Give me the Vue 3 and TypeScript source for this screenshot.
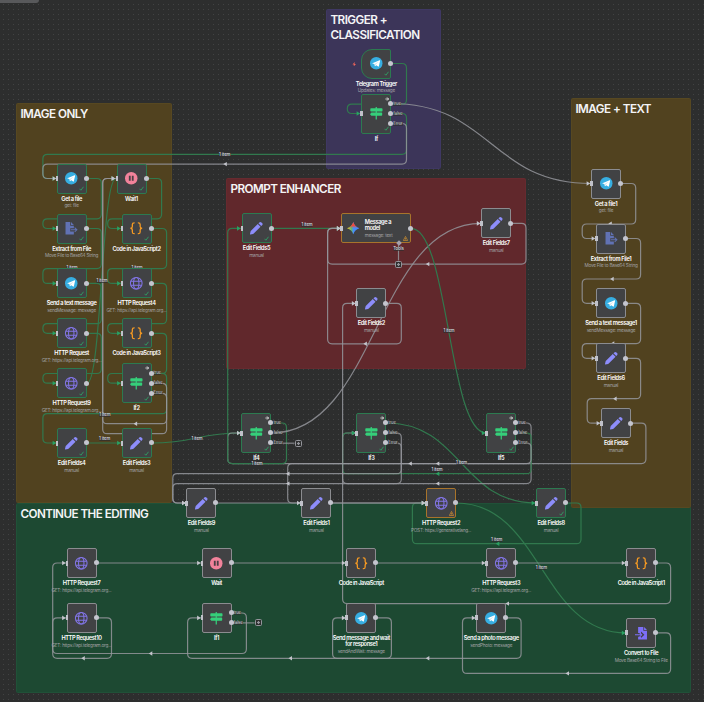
<script setup lang="ts">
type Icon = 'telegram' | 'pause' | 'extract' | 'code' | 'http' | 'if' | 'edit' | 'convert' | 'gemini'
type Status = 'ok' | 'warn' | 'idle'
type Tone = 'green' | 'grey'
type Point = [number, number]

interface Output { y: number; text?: string }
interface FlowNode {
  name: string[]
  sub?: string
  icon: Icon
  x: number
  y: number
  w: number
  h: number
  status: Status
  trigger?: boolean
  wide?: boolean
  outputs: Output[]
}
interface Edge { d: string; tone: Tone; tip?: Point }
interface Mark { x: number; y: number; tone: Tone }
interface Panel { title: string[]; tone: string; x: number; y: number; w: number; h: number }

const panels: Panel[] = [
  { title: ['CONTINUE THE EDITING'], tone: 'forest', x: 16, y: 503, w: 675, h: 190 },
  { title: ['IMAGE ONLY'], tone: 'olive', x: 16, y: 103, w: 156, h: 400 },
  { title: ['IMAGE + TEXT'], tone: 'olive', x: 571, y: 98, w: 120, h: 410 },
  { title: ['PROMPT ENHANCER'], tone: 'crimson', x: 226, y: 178, w: 300, h: 190.5 },
  { title: ['TRIGGER +', 'CLASSIFICATION'], tone: 'violet', x: 326, y: 8.5, w: 115.3, h: 160.5 },
]

function node(name: string | string[], icon: Icon, cx: number, cy: number, status: Status, sub?: string): FlowNode {
  return {
    name: Array.isArray(name) ? name : [name], sub, icon, status,
    x: cx - 15, y: cy - 15, w: 30, h: 30, outputs: [{ y: 15 }],
  }
}
function branch(name: string, cx: number, cy: number): FlowNode {
  return {
    name: [name], icon: 'if', status: 'ok', x: cx - 15, y: cy - 20, w: 30, h: 40,
    outputs: [{ y: 10, text: 'true' }, { y: 20, text: 'false' }, { y: 30, text: 'Error' }],
  }
}

const GET = 'GET: https://api.telegram.org...'
const MOVE = 'Move File to Base64 String'

const nodes: FlowNode[] = [
  { ...node('Telegram Trigger', 'telegram', 376.3, 63.5, 'ok', 'Updates: message'), trigger: true },
  branch('If', 376.3, 113.6),
  node('Get a file', 'telegram', 71.6, 178.5, 'ok', 'get: file'),
  node('Wait1', 'pause', 131.5, 178.5, 'ok'),
  node('Extract from File', 'extract', 71.6, 228.5, 'ok', MOVE),
  node('Code in JavaScript2', 'code', 136.5, 228.5, 'ok'),
  node('Send a text message', 'telegram', 71.6, 283.4, 'ok', 'sendMessage: message'),
  node('HTTP Request4', 'http', 136.5, 283.4, 'ok', GET),
  node('HTTP Request', 'http', 71.6, 333.3, 'ok', GET),
  node('Code in JavaScript3', 'code', 136.5, 333.3, 'ok'),
  node('HTTP Request9', 'http', 71.6, 383.2, 'ok', GET),
  branch('If2', 136.5, 383.3),
  node('Edit Fields4', 'edit', 71.6, 443, 'ok', 'manual'),
  node('Edit Fields3', 'edit', 136.5, 443, 'ok', 'manual'),
  node('Edit Fields5', 'edit', 256.5, 228.4, 'ok', 'manual'),
  { ...node(['Message a', 'model'], 'gemini', 376.3, 228.4, 'warn', 'message: text'), x: 341.3, w: 69.7, wide: true },
  node('Edit Fields7', 'edit', 496.2, 223.4, 'idle', 'manual'),
  node('Edit Fields2', 'edit', 371.3, 303.4, 'idle', 'manual'),
  node('Get a file1', 'telegram', 606, 183.5, 'idle', 'get: file'),
  node('Extract from File1', 'extract', 611, 238.5, 'idle', MOVE),
  node('Send a text message1', 'telegram', 611, 303.3, 'idle', 'sendMessage: message'),
  node('Edit Fields6', 'edit', 611, 358.3, 'idle', 'manual'),
  node('Edit Fields', 'edit', 616, 423.2, 'idle', 'manual'),
  branch('If4', 256.4, 433),
  branch('If3', 371.3, 433),
  branch('If5', 501.2, 433),
  node('Edit Fields9', 'edit', 201.4, 503, 'idle', 'manual'),
  node('Edit Fields1', 'edit', 316.4, 503, 'idle', 'manual'),
  node('HTTP Request2', 'http', 441.1, 503, 'warn', 'POST: https://generativelang...'),
  node('Edit Fields8', 'edit', 551.1, 503, 'ok', 'manual'),
  node('HTTP Request7', 'http', 81.5, 563, 'idle', GET),
  node('Wait', 'pause', 216.5, 563, 'idle'),
  node('Code in JavaScript', 'code', 361.3, 563, 'idle'),
  node('HTTP Request3', 'http', 501.2, 563, 'idle', GET),
  node('Code in JavaScript1', 'code', 641.2, 563, 'idle'),
  node('HTTP Request10', 'http', 81.5, 617.9, 'idle', GET),
  { ...node('If1', 'if', 216.5, 617.9, 'idle'), outputs: [{ y: 10, text: 'true' }, { y: 20, text: 'false' }] },
  node(['Send message and wait', 'for response1'], 'telegram', 361.3, 617.9, 'idle', 'sendAndWait: message'),
  node('Send a photo message', 'telegram', 491.2, 617.9, 'idle', 'sendPhoto: message'),
  node('Convert to File', 'convert', 641.2, 632.9, 'idle', 'Move Base64 String to File'),
]

/** Orthogonal polyline whose corners are rounded by up to 4.5px. */
function ortho(points: Point[]): string {
  let d = `M${points[0][0]} ${points[0][1]}`
  for (let i = 1; i < points.length - 1; i++) {
    const [px, py] = points[i - 1]
    const [x, y] = points[i]
    const [nx, ny] = points[i + 1]
    const a = Math.abs(x - px) + Math.abs(y - py)
    const b = Math.abs(nx - x) + Math.abs(ny - y)
    const r = Math.min(4.5, a / 2, b / 2)
    d += `L${x - Math.sign(x - px) * r} ${y - Math.sign(y - py) * r}`
    d += `Q${x} ${y} ${x + Math.sign(nx - x) * r} ${y + Math.sign(ny - y) * r}`
  }
  const end = points[points.length - 1]
  return `${d}L${end[0]} ${end[1]}`
}
/** Leaves a port to the right, runs back along `mid`, and re-enters from the left. */
function loop(tone: Tone, sx: number, sy: number, right: number, mid: number, left: number, tx: number, ty: number): Edge {
  return { tone, tip: [tx, ty], d: ortho([[sx, sy], [right, sy], [right, mid], [left, mid], [left, ty], [tx, ty]]) }
}
function curve(tone: Tone, sx: number, sy: number, tx: number, ty: number): Edge {
  const m = (sx + tx) / 2
  return { tone, tip: [tx, ty], d: `M${sx} ${sy}C${m} ${sy} ${m} ${ty} ${tx} ${ty}` }
}
function line(tone: Tone, sx: number, tx: number, y: number): Edge {
  return { tone, tip: [tx, y], d: `M${sx} ${y}H${tx}` }
}

const edges: Edge[] = [
  loop('green', 391, 63.5, 406.5, 104.2, 347.3, 361, 113.5),
  loop('green', 391, 113.5, 406.5, 154.3, 42.9, 57, 178.5),
  loop('grey', 391, 123.5, 406.5, 164.1, 42.9, 57, 178.5),
  curve('grey', 391, 103.5, 591, 183.5),
  loop('green', 87, 178.5, 101.3, 218.8, 42.9, 57, 228.5),
  loop('green', 87, 228.5, 101.3, 268.6, 42.9, 57, 283.4),
  loop('green', 87, 283.4, 101.3, 323.7, 42.9, 57, 333.3),
  loop('green', 87, 333.3, 101.3, 373.5, 42.9, 57, 383.2),
  curve('green', 87, 383.2, 116, 178.5),
  loop('green', 147, 178.5, 161.6, 218.8, 107.7, 121.5, 228.5),
  loop('green', 151.5, 228.5, 166.6, 268.6, 107.7, 121.5, 283.4),
  loop('green', 151.5, 283.4, 166.6, 323.7, 107.7, 121.5, 333.3),
  loop('green', 151.5, 333.3, 166.6, 373.5, 107.7, 121.5, 383.2),
  loop('green', 151.5, 373.3, 166.6, 413.7, 42.9, 57, 443),
  loop('grey', 151.5, 383.3, 166.6, 423.7, 102.7, 116, 178.5),
  loop('grey', 151.5, 393.3, 166.6, 433.7, 102.7, 116, 178.5),
  line('green', 87, 121.5, 443),
  curve('green', 151.5, 443, 241.4, 433),
  loop('grey', 631, 423.2, 645.9, 463.6, 227.7, 241.4, 433),
  loop('green', 271.4, 423, 286.5, 463.6, 227.7, 241.4, 228.4),
  line('green', 271.5, 341.3, 228.4),
  loop('grey', 511.2, 223.4, 526, 264.1, 327.6, 341.3, 228.4),
  loop('grey', 386.3, 303.4, 401.3, 343.8, 327.6, 341.3, 228.4),
  curve('grey', 271.4, 433, 481.2, 223.4),
  curve('green', 411, 228.4, 486.2, 433),
  { tone: 'grey', d: 'M271.4 443.2H294.5' },
  { tone: 'grey', d: 'M398.5 243.5V260.5' },
  curve('green', 386.3, 423, 536.1, 503),
  loop('grey', 516.2, 423, 531.1, 483.6, 342.6, 356.3, 433),
  loop('green', 516.2, 433, 531.1, 473.7, 342.6, 356.3, 433),
  loop('grey', 516.2, 443, 531.1, 463.6, 287.7, 301.4, 503),
  loop('grey', 386.3, 433, 401.3, 473.7, 172.8, 186.4, 503),
  loop('grey', 386.3, 443, 401.3, 483.6, 172.8, 186.4, 503),
  loop('green', 566.1, 503, 581, 543.7, 412.4, 426.1, 503),
  line('grey', 216.5, 426.1, 503),
  line('grey', 331.4, 426.1, 503),
  curve('green', 456.1, 503, 626.2, 632.9),
  line('grey', 96.6, 201.5, 563),
  line('grey', 231.6, 346.3, 563),
  line('grey', 376.3, 486.2, 563),
  line('grey', 516.2, 626.2, 563),
  loop('grey', 656.2, 563, 670.6, 603.6, 342.6, 356.3, 303.4),
  loop('grey', 96.6, 617.9, 111.5, 658.3, 52.7, 66.5, 617.9),
  loop('grey', 231.6, 613, 246.4, 653.5, 52.7, 66.5, 563),
  { tone: 'grey', d: 'M231.6 622.9H254.5' },
  loop('grey', 376.3, 617.9, 391.4, 658.3, 187.6, 201.5, 617.9),
  loop('grey', 506.2, 617.9, 521.1, 658.3, 332.6, 346.3, 617.9),
  loop('grey', 656.2, 632.9, 670.6, 673.4, 462.5, 476.2, 617.9),
  loop('grey', 621, 183.5, 635.7, 224, 582.2, 596, 238.5),
  loop('grey', 626, 238.5, 640.6, 279, 582.2, 596, 303.3),
  loop('grey', 626, 303.3, 640.6, 343.6, 582.2, 596, 358.3),
  loop('grey', 626, 358.3, 640.6, 398.7, 587.2, 601, 423.2),
]

const marks: Mark[] = [
  { x: 225.5, y: 164.1, tone: 'grey' }, { x: 135.8, y: 423.7, tone: 'grey' },
  { x: 428, y: 264.1, tone: 'grey' }, { x: 365.6, y: 343.8, tone: 'grey' },
  { x: 410.5, y: 463.6, tone: 'grey' }, { x: 438, y: 463.6, tone: 'grey' },
  { x: 438, y: 473.7, tone: 'green' }, { x: 438, y: 483.6, tone: 'grey' },
  { x: 288.2, y: 473.7, tone: 'grey' }, { x: 288.2, y: 483.6, tone: 'grey' },
  { x: 498, y: 543.7, tone: 'green' }, { x: 507.7, y: 603.6, tone: 'grey' },
  { x: 83.5, y: 658.3, tone: 'grey' }, { x: 151, y: 653.5, tone: 'grey' },
  { x: 290.7, y: 658.3, tone: 'grey' }, { x: 428, y: 658.3, tone: 'grey' },
  { x: 567.7, y: 673.4, tone: 'grey' }, { x: 612.4, y: 279, tone: 'grey' },
  { x: 615.3, y: 398.7, tone: 'grey' }, { x: 610.5, y: 223.6, tone: 'grey' },
  { x: 613, y: 343.4, tone: 'grey' },
]

const pluses: Point[] = [[298.2, 443.3], [258.2, 622.9], [398.5, 264.1]]

const captions: { text: string; x: number; y: number }[] = [
  { text: '1 item', x: 224.7, y: 154.8 }, { text: '1 item', x: 72, y: 268.3 },
  { text: '1 item', x: 137, y: 268.3 }, { text: '1 item', x: 102, y: 280.8 },
  { text: '1 item', x: 104.8, y: 414.8 }, { text: '1 item', x: 104.6, y: 438.8 },
  { text: '1 item', x: 197, y: 438.8 }, { text: '1 item', x: 257, y: 463.8 },
  { text: '1 item', x: 307, y: 224.8 }, { text: '1 item', x: 449, y: 330.9 },
  { text: '1 item', x: 461.5, y: 462.9 }, { text: '1 item', x: 437, y: 469.8 },
  { text: '1 item', x: 496.7, y: 539.8 }, { text: '1 item', x: 541.3, y: 567.8 },
  { text: 'Tools', x: 398.5, y: 249 },
]

function box(p: { x: number; y: number; w: number; h: number }) {
  return { left: `${p.x}px`, top: `${p.y}px`, width: `${p.w}px`, height: `${p.h}px` }
}
function at(x: number, y: number) {
  return { left: `${x}px`, top: `${y}px` }
}
</script>

<template>
  <main class="canvas">
    <div class="tab"></div>

    <section v-for="p in panels" :key="p.title[0]" class="panel" :class="p.tone" :style="box(p)">
      <h2><span v-for="t in p.title" :key="t">{{ t }}</span></h2>
    </section>

    <svg class="wires" viewBox="0 0 704 702">
      <path v-for="(e, i) in edges" :key="i" :d="e.d" :class="e.tone" />
      <g v-for="(e, i) in edges" :key="'t' + i">
        <path v-if="e.tip" class="tip" :class="e.tone" :transform="`translate(${e.tip[0]} ${e.tip[1]})`" d="M-4.4-2.3L-.8 0L-4.4 2.3Z" />
      </g>
      <path v-for="(m, i) in marks" :key="'m' + i" class="tip" :class="m.tone" :transform="`translate(${m.x} ${m.y})`" d="M-2.2 0L1.3-2.2V2.2Z" />
    </svg>

    <span v-for="(c, i) in captions" :key="'c' + i" class="caption" :style="at(c.x, c.y)">{{ c.text }}</span>
    <i v-for="(p, i) in pluses" :key="'p' + i" class="plus" :style="at(p[0], p[1])"></i>

    <div v-for="n in nodes" :key="n.name[0]" class="node" :class="[n.status, { trigger: n.trigger, wide: n.wide }]" :style="box(n)">
      <svg class="icon" viewBox="0 0 24 24">
        <template v-if="n.icon === 'telegram'">
          <circle cx="12" cy="12" r="12" fill="#37aee2" />
          <path d="M4.6 11.8L18.4 6.2c.7-.3 1.2.2 1 1L17 17.8c-.2.8-.8 1-1.4.6l-3.6-2.7-1.8 1.8c-.5.4-.9.2-1-.4l-.8-3.5-3.6-1.1c-.7-.2-.8-.5-.2-.7z" fill="#fff" />
          <path d="M9.3 13.6l7.3-5-5.8 5.8-.6 2.6z" fill="#c4deee" />
        </template>
        <template v-else-if="n.icon === 'pause'">
          <circle cx="12" cy="12" r="12" fill="#f2829b" />
          <path d="M7.4 7h3.5v10H7.4zM13.1 7h3.5v10h-3.5z" fill="#4c3f44" />
        </template>
        <g v-else-if="n.icon === 'http'" fill="none" stroke="#8275e6" stroke-width="2">
          <circle cx="12" cy="12" r="11.2" />
          <ellipse cx="12" cy="12" rx="5.2" ry="11.2" />
          <path d="M2 8.2H22M2 15.8H22" />
        </g>
        <g v-else-if="n.icon === 'code'" fill="none" stroke="#f59a23" stroke-width="2.5" stroke-linecap="round" stroke-linejoin="round">
          <path d="M8 1.5C5.1 1.5 4.5 3 4.5 5v3.500c0 2-1 3.100-2.800 3.500 1.800.4 2.800 1.500 2.800 3.500V19c0 2 .6 3.500 3.500 3.500" />
          <path d="M16 1.500c2.900 0 3.500 1.500 3.500 3.500v3.500c0 2 1 3.100 2.800 3.500-1.800.4-2.800 1.500-2.800 3.500V19c0 2-.6 3.500-3.500 3.500" />
        </g>
        <path v-else-if="n.icon === 'if'" fill="#35d07a" d="M10.800 0h2.400v2.200H22.600q1.400 0 1.400 1.400V7q0 1.400-1.400 1.400H13.200v2.200H22q1.400 0 1.400 1.400v3.400q0 1.400-1.400 1.400h-8.800V24h-2.400v-7.200H2.600L0 13.700l2.600-3.100h8.200V8.400H2Q.6 8.400.6 7V3.600Q.6 2.200 2 2.200h8.800z" />
        <path v-else-if="n.icon === 'edit'" fill="#8d8dfb" d="M16.200 2.500l1.700-1.700a2.800 2.800 0 0 1 4 0l1.300 1.300a2.800 2.800 0 0 1 0 4l-1.700 1.700zM14.900 3.800l5.300 5.300L7.200 22.100q-.6.600-1.400.8L.7 24Q-.2 24.100 0 23.200l1.100-5q.2-.8.800-1.400z" />
        <template v-else-if="n.icon === 'extract'">
          <path fill="#6172b4" d="M1 0H10V7H17V12H10V18H17V24H1zM11.500 0L17 5.600H11.500z" />
          <path fill="none" stroke="#6172b4" stroke-width="2" d="M11 15H22.500M18.500 10.800L22.800 15L18.500 19.200" />
        </template>
        <template v-else-if="n.icon === 'convert'">
          <path fill="#7d6ff8" d="M6 0H16V7H23V24H6V18.500H11.500V21L18 14.800L11.500 8.800V11.500H6zM17.500 0L23 5.600H17.500z" />
          <path fill="none" stroke="#7d6ff8" stroke-width="2" d="M0 15H12.500M8.800 10.800L13 15L8.800 19.200" />
        </template>
        <template v-else>
          <defs>
            <clipPath id="spark"><path d="M12 0Q14.600 9.400 24 12Q14.600 14.600 12 24Q9.400 14.600 0 12Q9.400 9.400 12 0Z" /></clipPath>
            <linearGradient id="sparkFill" x1="0" y1=".5" x2="1" y2=".5">
              <stop offset="0" stop-color="#f8c21c" /><stop offset=".36" stop-color="#5cb877" /><stop offset=".52" stop-color="#4a8df6" /><stop offset="1" stop-color="#3f86ff" />
            </linearGradient>
            <linearGradient id="sparkTop" x1="0" y1="0" x2="0" y2="1">
              <stop offset="0" stop-color="#f4483c" /><stop offset=".28" stop-color="#f4483c" /><stop offset=".48" stop-color="#f4483c" stop-opacity="0" />
            </linearGradient>
          </defs>
          <g clip-path="url(#spark)"><path fill="url(#sparkFill)" d="M0 0H24V24H0z" /><path fill="url(#sparkTop)" d="M0 0H24V24H0z" /></g>
        </template>
      </svg>

      <div class="label">
        <strong><span v-for="t in n.name" :key="t">{{ t }}</span></strong>
        <small v-if="n.sub">{{ n.sub }}</small>
      </div>

      <i v-if="!n.trigger" class="input"></i>
      <template v-for="o in n.outputs" :key="o.y">
        <i class="output" :style="{ top: o.y - 0.1 + 'px' }"></i>
        <span v-if="o.text" class="branch" :style="{ top: o.y + 'px' }">{{ o.text }}</span>
      </template>

      <svg v-if="n.status === 'ok'" class="badge" viewBox="0 0 10 10"><path d="M1 5.500L3.800 8.500L9 1.500" fill="none" stroke="#2fa567" stroke-width="1.700" /></svg>
      <svg v-if="n.status === 'warn'" class="badge" viewBox="0 0 10 10"><path d="M5 .8L9.400 9H.6zM5 4V6.300M5 7V8" fill="none" stroke="#d9952e" stroke-width="1.300" /></svg>
      <svg v-if="n.h > 30" class="split" viewBox="0 0 10 10"><path d="M1 5H9M5 1L9 5L5 9" fill="none" stroke="#f2f2f4" stroke-width="2" /></svg>
      <svg v-if="n.trigger" class="bolt" viewBox="0 0 10 10"><path d="M6.200 0L1 5.800H4.300L3.600 10L9 4.200H5.600z" fill="#f1655a" /></svg>
      <i v-if="n.wide" class="diamond"></i>
    </div>
  </main>
</template>

<style>
body {
  margin: 0;
  background: #2d2e2e;
}
</style>

<style scoped>
.canvas {
  position: relative;
  width: 704px;
  height: 702px;
  overflow: hidden;
  background: radial-gradient(circle at 2.5px 2.5px, #424343 0, #424343 0.4px, transparent 0.9px) 1px 2px / 5px 5px #2d2e2e;
  font-family: Inter, 'Liberation Sans', sans-serif;
  color: #f4f4f6;
}
.tab {
  width: 39px;
  height: 3px;
  background: #58595b;
  border-radius: 0 0 4px 0;
}
.panel {
  position: absolute;
  box-sizing: border-box;
  border: 1px solid;
  border-radius: 1.5px;
}
.panel h2 {
  margin: 0;
  padding: 3px 3.4px;
  display: flex;
  flex-direction: column;
  font-size: 11.7px;
  line-height: 15px;
  font-weight: 600;
  letter-spacing: -0.54px;
  white-space: nowrap;
}
.forest { background: #1d4932; border-color: #205138; }
.olive { background: #51421f; border-color: #574821; }
.crimson { background: #61282c; border-color: #672a2f; }
.violet { background: #3c3559; border-color: #3f3863; }

.wires {
  position: absolute;
  inset: 0;
  width: 704px;
  height: 702px;
}
.wires path { fill: none; stroke-width: 1.2; }
.wires .green { stroke: #31794e; }
.wires .grey { stroke: #94959b; stroke-opacity: 0.85; }
.wires .tip { stroke: none; }
.wires .tip.green { fill: #2aa163; }
.wires .tip.grey { fill: #c3c4cb; }

.caption {
  position: absolute;
  transform: translate(-50%, -50%);
  font-size: 4.3px;
  line-height: 4px;
  font-weight: 500;
  letter-spacing: -0.1px;
  color: #dcdce0;
  background: rgba(45, 46, 46, 0.7);
  white-space: nowrap;
}
.plus {
  position: absolute;
  box-sizing: border-box;
  width: 7px;
  height: 7px;
  margin: -3.5px 0 0 -3.5px;
  border: 1px solid #94959b;
  border-radius: 1.5px;
  background: radial-gradient(circle, #94959b 1px, #2d2e2e 1.5px);
}

.node {
  position: absolute;
  box-sizing: border-box;
  display: flex;
  align-items: center;
  justify-content: center;
  border: 1px solid #8b8c90;
  border-radius: 2px;
  background: #414244;
}
.node.ok { border-color: #2c7a50; }
.node.warn { border-color: #a8742b; }
.node.trigger { border-radius: 11px 2px 2px 11px; }
.node.wide { justify-content: flex-start; gap: 5px; padding-left: 5px; }
.icon { flex: none; width: 12.5px; height: 12.5px; overflow: visible; }

.label {
  position: absolute;
  top: 100%;
  left: 50%;
  transform: translateX(-50%);
  display: flex;
  flex-direction: column;
  align-items: center;
  gap: 1.8px;
  padding-top: 3px;
  white-space: nowrap;
}
.label strong {
  display: flex;
  flex-direction: column;
  align-items: center;
  font-size: 5.7px;
  line-height: 6px;
  font-weight: 600;
  letter-spacing: -0.38px;
  color: #fff;
}
.label small {
  font-size: 4.7px;
  line-height: 4.4px;
  letter-spacing: -0.25px;
  color: #a3a3a6;
}
.wide .label {
  position: static;
  transform: none;
  padding: 0;
  align-items: flex-start;
}
.wide .label strong { align-items: flex-start; }

.input {
  position: absolute;
  left: -2px;
  top: 50%;
  width: 2.5px;
  height: 5px;
  margin-top: -2.5px;
  background: #c1c2ca;
}
.output {
  position: absolute;
  right: -3px;
  width: 5px;
  height: 5px;
  margin-top: -3.5px;
  border-radius: 50%;
  background: #c4c5ce;
}
.branch {
  position: absolute;
  left: calc(100% + 3px);
  margin-top: -3px;
  font-size: 4.2px;
  line-height: 4px;
  letter-spacing: -0.1px;
  color: #c8c8cd;
  background: rgba(45, 46, 46, 0.6);
}
.badge {
  position: absolute;
  right: 1.5px;
  bottom: 1.5px;
  width: 5px;
  height: 5px;
}
.split {
  position: absolute;
  right: 1.8px;
  top: 2px;
  width: 4px;
  height: 4px;
}
.bolt {
  position: absolute;
  left: -10.5px;
  top: 12px;
  width: 4.5px;
  height: 4.5px;
}
.diamond {
  position: absolute;
  left: 54.5px;
  bottom: -3px;
  width: 4px;
  height: 4px;
  transform: rotate(45deg);
  background: #a5a2ad;
}
</style>
